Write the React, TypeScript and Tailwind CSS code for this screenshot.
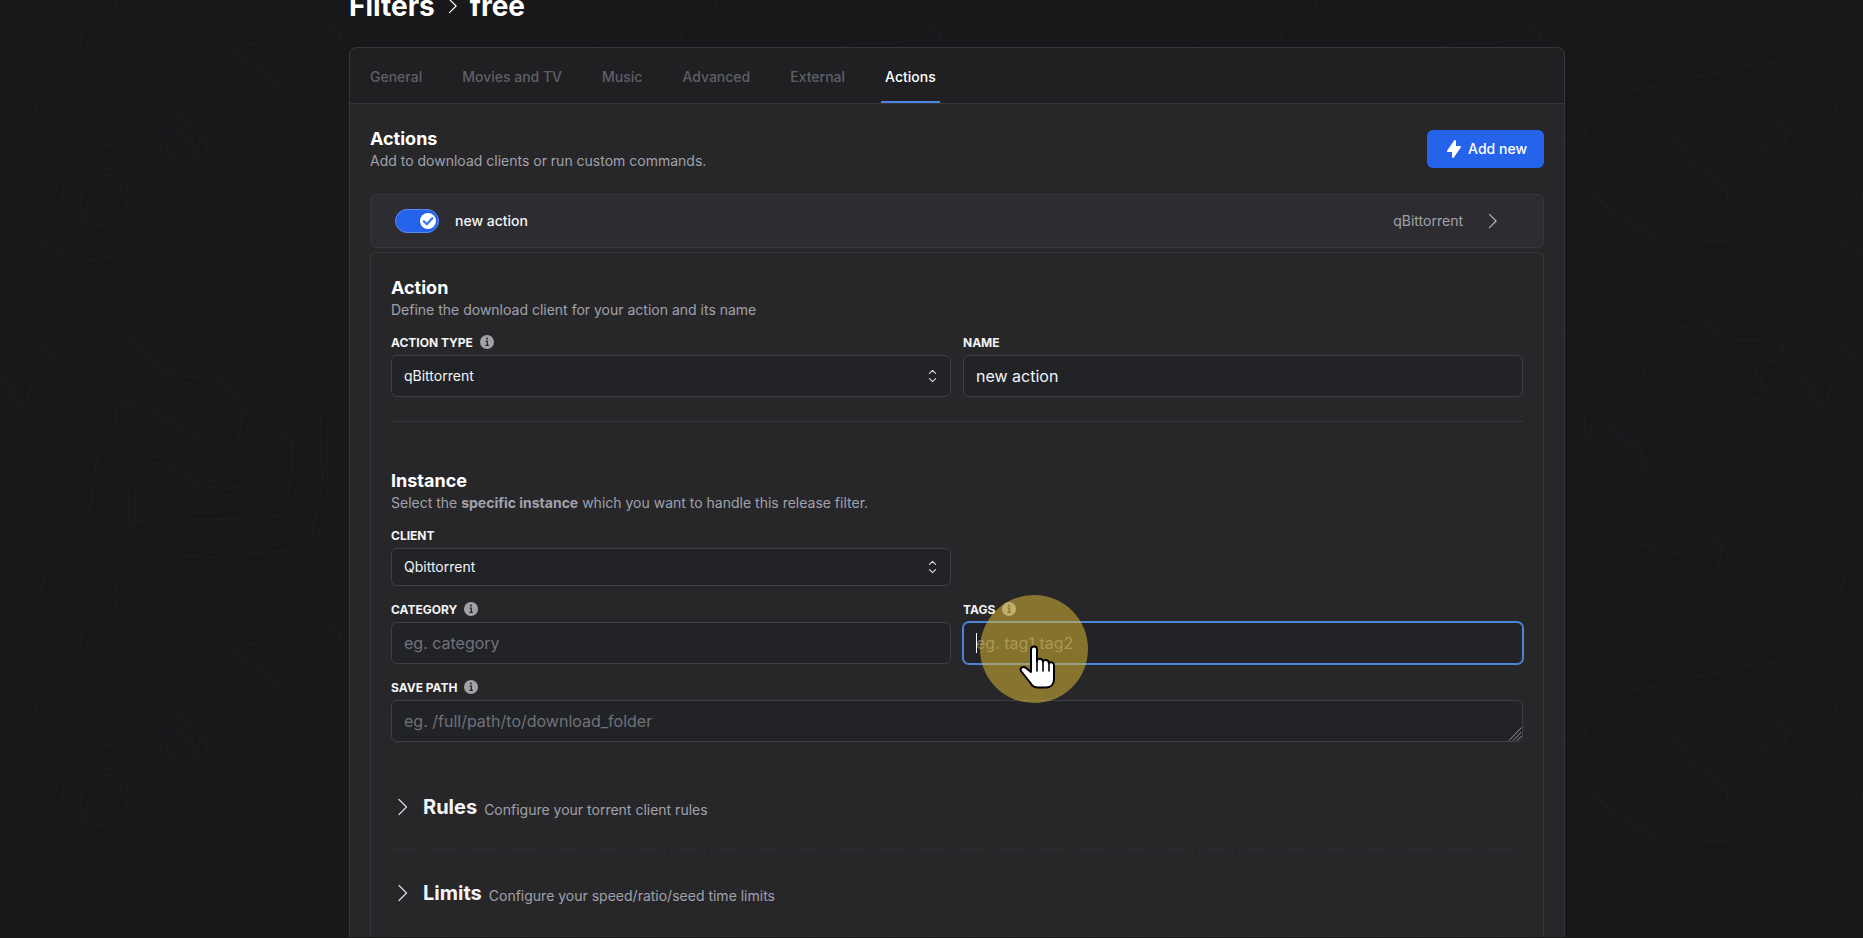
import { useState } from "react";
import type { ReactNode } from "react";

const tabs = ["General", "Movies and TV", "Music", "Advanced", "External", "Actions"];

const leftContours = [
  "M0 92C40 65 60 40 110 5L115 -3",
  "M0 305C60 270 90 220 110 180C150 120 180 95 240 75C245 40 290 25 350 12",
  "M345 240C260 250 200 275 190 320C190 355 130 380 135 410C170 420 200 425 215 435C330 440 440 420 480 345C520 325 600 310 620 250C620 215 560 195 520 200C460 205 440 230 400 235C370 235 355 235 345 240",
  "M500 248C500 210 580 210 580 248C580 286 500 286 500 248",
  "M240 340C240 290 380 270 385 325C385 380 240 400 240 340",
  "M690 85C760 65 830 75 890 72C950 62 990 38 1018 50C1030 75 990 100 940 135C860 165 830 150 800 125C760 105 720 100 690 85Z",
  "M1045 260C1000 290 970 300 950 340C900 400 760 400 630 435C590 470 400 510 402 562C410 590 480 625 560 630C620 633 680 630 690 650C730 675 735 690 725 700C720 760 680 745 640 740C540 725 500 685 355 678C340 700 350 720 330 735C280 760 285 790 278 820C265 880 240 890 190 910C150 935 140 960 115 1000",
  "M385 870C385 830 385 805 400 800C460 765 490 770 540 790C620 825 740 825 790 790C830 755 850 720 870 722C885 735 880 820 840 862C700 870 500 870 385 870",
  "M350 1012C355 990 345 975 355 970C440 920 460 925 520 928C600 930 680 935 720 930C780 915 920 935 940 895C930 870 960 860 968 800C960 740 955 690 975 680C1000 655 1020 650 1045 642",
  "M25 590C80 580 150 580 168 590C150 610 110 610 95 640C80 680 65 690 45 670C10 640 10 600 25 590",
];

const rightContours = [
  "M-15 245C30 235 60 235 75 225C80 180 160 155 220 150C320 145 330 125 400 128C480 128 530 105 600 107C660 110 690 90 740 80",
  "M100 315C150 260 250 205 320 212C370 225 360 265 420 280C500 300 505 320 500 335C480 375 400 360 280 392C200 375 110 340 100 315Z",
  "M-15 553C50 550 90 540 115 510C180 440 250 470 320 440C400 435 390 400 440 403C540 405 540 390 580 375C680 340 740 310 780 270",
  "M600 232C620 218 670 205 680 215C685 240 650 265 630 262C610 255 595 240 600 232Z",
  "M80 685C110 660 230 650 250 625C280 580 310 570 360 548C410 540 440 535 490 565C560 570 600 570 650 563C685 575 665 600 640 603C600 610 570 600 590 630C650 650 620 670 570 667C510 675 500 720 430 728C370 735 300 785 265 785C240 785 245 765 240 750C225 725 190 760 178 735C175 700 150 720 80 728C70 720 75 695 80 685Z",
  "M75 1020C100 990 180 980 210 940C240 890 260 915 310 925C360 930 420 910 440 895C480 880 500 930 460 960C430 975 390 960 350 990C300 1020 240 1005 210 1030C180 1045 120 1040 75 1020Z",
];

function ContourTile() {
  return (
    <g id="contours" fill="none" strokeWidth="1">
      <g transform="scale(.3333 .5982)">
        {leftContours.map((d) => (
          <path key={d} d={d} vectorEffect="non-scaling-stroke" />
        ))}
      </g>
      <g transform="translate(360 0) scale(.3333 .5982)">
        {rightContours.map((d) => (
          <path key={d} d={d} vectorEffect="non-scaling-stroke" />
        ))}
      </g>
    </g>
  );
}

function Backdrop() {
  return (
    <svg aria-hidden="true" className="absolute inset-x-0 top-0 h-[843px] w-full">
      <defs>
        <ContourTile />
        <pattern id="topography" width="600" height="600" patternUnits="userSpaceOnUse">
          <use href="#contours" x="6" y="8" stroke="#1a1a1d" />
          <use href="#contours" x="-7" y="-7" stroke="#1a1a1d" />
          <use href="#contours" stroke="#1d1d20" />
          <use href="#contours" y="-600" stroke="#1d1d20" />
        </pattern>
      </defs>
      <rect width="100%" height="100%" fill="url(#topography)" />
    </svg>
  );
}

function Chevron({ className }: { className: string }) {
  return (
    <svg aria-hidden="true" viewBox="0 0 10 18" fill="none" stroke="currentColor" strokeWidth="1.3" strokeLinecap="round" strokeLinejoin="round" className={className}>
      <path d="M1 1.5 8.5 9 1 16.5" />
    </svg>
  );
}

function InfoIcon() {
  return (
    <svg aria-hidden="true" viewBox="0 0 14 14" className="mb-0.5 h-3.5 w-3.5 text-[#a1a1aa]">
      <circle cx="7" cy="7" r="7" fill="currentColor" />
      <path d="M5.600 6.100h1.700v4.200M5.300 10.400h3.600" stroke="#27272a" strokeWidth="1.3" fill="none" />
      <circle cx="7" cy="3.6" r="1" fill="#27272a" />
    </svg>
  );
}

function FieldLabel({ htmlFor, children, info }: { htmlFor: string; children: ReactNode; info?: boolean }) {
  return (
    <label htmlFor={htmlFor} className="flex h-4 items-center gap-[7px] text-xs font-bold uppercase text-gray-100">
      {children}
      {info && <InfoIcon />}
    </label>
  );
}

function SelectBox({ id, value, height }: { id: string; value: string; height: string }) {
  return (
    <div className="relative">
      <select id={id} defaultValue={value} className={`${height} block w-full appearance-none rounded-md border border-[#3f3f46] bg-[#222326] px-3 text-sm text-gray-100 outline-none`}>
        <option>{value}</option>
      </select>
      <svg aria-hidden="true" viewBox="0 0 10 16" fill="none" stroke="#d4d4d8" strokeWidth="1.4" strokeLinecap="round" strokeLinejoin="round" className="pointer-events-none absolute inset-y-0 right-3.5 my-auto h-3.5 w-[9px]">
        <path d="M1.500 5 5 1.500 8.500 5M1.500 11 5 14.500 8.500 11" />
      </svg>
    </div>
  );
}

function SectionTitle({ title, children }: { title: string; children: ReactNode }) {
  return (
    <div>
      <h2 className="text-lg leading-6 font-bold text-white">{title}</h2>
      <p className="text-sm leading-5 text-[#a1a1aa]">{children}</p>
    </div>
  );
}

function Collapsed({ title, note }: { title: string; note: string }) {
  return (
    <button type="button" className="flex h-[86px] w-full items-center border-b-2 border-dashed border-[#2d2d31] pl-[7px] text-left">
      <Chevron className="h-[18px] w-2.5 text-[#d4d4d8]" />
      <span className="ml-[15px] text-xl leading-7 font-bold text-gray-100">{title}</span>
      <span className="mt-1.5 ml-[7px] text-sm text-[#a1a1aa]">{note}</span>
    </button>
  );
}

function Pointer() {
  return (
    <div aria-hidden="true" className="pointer-events-none absolute top-[-27px] left-[17px] z-10 h-[108px] w-[108px] rounded-full bg-[rgba(225,188,52,0.52)]">
      <svg viewBox="0 0 38 46" className="absolute top-[49px] left-[38px] h-[46px] w-[38px]">
        <path
          d="M13 28V5.500a3 3 0 0 1 6 0V17c0-3 5.500-3 6 0.500c1-2.500 5.500-2 6 1.500c1.500-1.500 5-1 5 2.500V35c0 5-3 8.500-8 8.500h-8c-4 0-6-1.500-7.500-4.500L3 27c-1.500-3 2-5.500 5-3z"
          fill="#fff"
          stroke="#000"
          strokeWidth="2"
          strokeLinejoin="round"
        />
        <path d="M19 16v11M25 18v9M31 20v7" stroke="#000" strokeWidth="1.6" strokeLinecap="round" />
      </svg>
    </div>
  );
}

const fieldClass =
  "block h-[42px] w-full rounded-md border border-[#3f3f46] bg-[#222326] px-3 text-base text-gray-100 placeholder-[#71717a] outline-none";

export default function App() {
  const [enabled, setEnabled] = useState(true);

  return (
    <div className="relative h-screen overflow-hidden bg-[#18181b] pl-[51px] font-['Inter',sans-serif]">
      <Backdrop />
      <main className="relative mx-auto -mt-2.5 w-full max-w-[1216px]">
        <h1 className="flex h-8 items-center text-[28px] leading-8 font-bold text-white">
          Filters
          <Chevron className="mr-3 ml-[13px] h-4 w-2.5" />
          free
        </h1>

        <div className="mt-[25px] rounded-t-lg border border-b-0 border-[#37373b] bg-[#27272a]">
          <nav className="flex gap-8 rounded-t-lg border-b border-[#37373b] bg-[#202023] px-4">
            {tabs.map((tab) => (
              <a
                key={tab}
                href={`#${tab}`}
                className={
                  tab === "Actions"
                    ? "border-b-2 border-[#4c84e0] px-1 pt-[19px] pb-3.5 text-sm font-medium text-white"
                    : "border-b-2 border-transparent px-1 pt-[19px] pb-3.5 text-sm font-medium text-[#5f5f67]"
                }
              >
                {tab}
              </a>
            ))}
          </nav>

          <div className="px-5 pt-[23px]">
            <div className="flex items-center justify-between">
              <SectionTitle title="Actions">Add to download clients or run custom commands.</SectionTitle>
              <button type="button" className="flex h-[38px] items-center gap-1 rounded-md border border-transparent bg-[#2563eb] px-4 text-sm font-medium text-white">
                <svg aria-hidden="true" viewBox="0 0 20 20" fill="currentColor" className="h-5 w-5">
                  <path fillRule="evenodd" clipRule="evenodd" d="M11.300 1.046A1 1 0 0 1 12 2v5h4a1 1 0 0 1 .82 1.573l-7 10A1 1 0 0 1 8 18v-5H4a1 1 0 0 1-.82-1.573l7-10a1 1 0 0 1 1.120-.381z" />
                </svg>
                Add new
              </button>
            </div>

            <div className="mt-[23px] flex h-[54px] items-center rounded-md border border-[#37373b] bg-[#2d2d31] pr-[45px] pl-6">
              <button
                type="button"
                role="switch"
                aria-checked={enabled}
                aria-label="Enable new action"
                onClick={() => setEnabled(!enabled)}
                className={enabled ? "flex h-6 w-11 items-center justify-end rounded-full border border-[#5b8bf0] bg-[#2563eb] px-0.5" : "flex h-6 w-11 items-center rounded-full border border-zinc-600 bg-zinc-700 px-0.5"}
              >
                <svg aria-hidden="true" viewBox="0 0 16 16" className="h-4 w-4">
                  <circle cx="8" cy="8" r="8" fill="#fff" />
                  <path d="M3.800 8.300 6.800 11.200l5.500-6" stroke="#3b74e8" strokeWidth="2.2" fill="none" strokeLinecap="round" strokeLinejoin="round" />
                </svg>
              </button>
              <span className="ml-4 text-sm font-medium text-gray-100">new action</span>
              <span className="ml-auto text-sm text-[#a1a1aa]">qBittorrent</span>
              <Chevron className="ml-[25px] h-4 w-2.5 text-[#b4b4bb]" />
            </div>

            <div className="mt-1 rounded-t-md border border-b-0 border-[#37373b] px-5 pt-[23px]">
              <SectionTitle title="Action">Define the download client for your action and its name</SectionTitle>
              <div className="mt-[15px] grid grid-cols-2 gap-3 border-b border-[#37373b] pb-6">
                <div className="grid gap-1">
                  <FieldLabel htmlFor="action-type" info>Action type</FieldLabel>
                  <SelectBox id="action-type" value="qBittorrent" height="h-[42px]" />
                </div>
                <div className="grid gap-1">
                  <FieldLabel htmlFor="name">Name</FieldLabel>
                  <input id="name" defaultValue="new action" className={fieldClass} />
                </div>
              </div>

              <div className="mt-[47px]">
                <SectionTitle title="Instance">
                  Select the <b className="font-bold">specific instance</b> which you want to handle this release filter.
                </SectionTitle>
              </div>
              <div className="mt-[15px] grid grid-cols-2 gap-x-3 gap-y-4">
                <div className="col-start-1 grid gap-1">
                  <FieldLabel htmlFor="client">Client</FieldLabel>
                  <SelectBox id="client" value="Qbittorrent" height="h-[38px]" />
                </div>
                <div className="col-start-1 grid gap-1">
                  <FieldLabel htmlFor="category" info>Category</FieldLabel>
                  <input id="category" placeholder="eg. category" className={fieldClass} />
                </div>
                <div className="grid gap-1">
                  <FieldLabel htmlFor="tags" info>Tags</FieldLabel>
                  <div className="relative">
                    <input id="tags" placeholder="eg. tag1,tag2" className="block h-[42px] w-full rounded-md border border-[#4c84d6] bg-[#222326] px-3 text-base text-gray-100 placeholder-[#71717a] ring-1 ring-[#4c84d6] outline-none" />
                    <span aria-hidden="true" className="absolute top-[11px] left-[13px] h-5 w-px bg-white" />
                    <Pointer />
                  </div>
                </div>
                <div className="col-span-2 grid gap-1">
                  <FieldLabel htmlFor="save-path" info>Save path</FieldLabel>
                  <div className="relative">
                    <textarea id="save-path" rows={1} placeholder="eg. /full/path/to/download_folder" className="block h-[42px] w-full resize-none overflow-hidden rounded-md border border-[#3f3f46] bg-[#222326] px-3 py-2 text-base text-gray-100 placeholder-[#71717a] outline-none" />
                    <svg aria-hidden="true" viewBox="0 0 14 14" className="pointer-events-none absolute right-px bottom-px h-3.5 w-3.5" stroke="#a1a1aa" strokeWidth="0.9">
                      <path d="M1 13.500 13.500 0.500M5 13.500 13.500 5M9 13.500 13.500 9" />
                    </svg>
                  </div>
                </div>
              </div>

              <div className="mt-[23px]">
                <Collapsed title="Rules" note="Configure your torrent client rules" />
                <Collapsed title="Limits" note="Configure your speed/ratio/seed time limits" />
              </div>
            </div>
          </div>
        </div>
      </main>
    </div>
  );
}
